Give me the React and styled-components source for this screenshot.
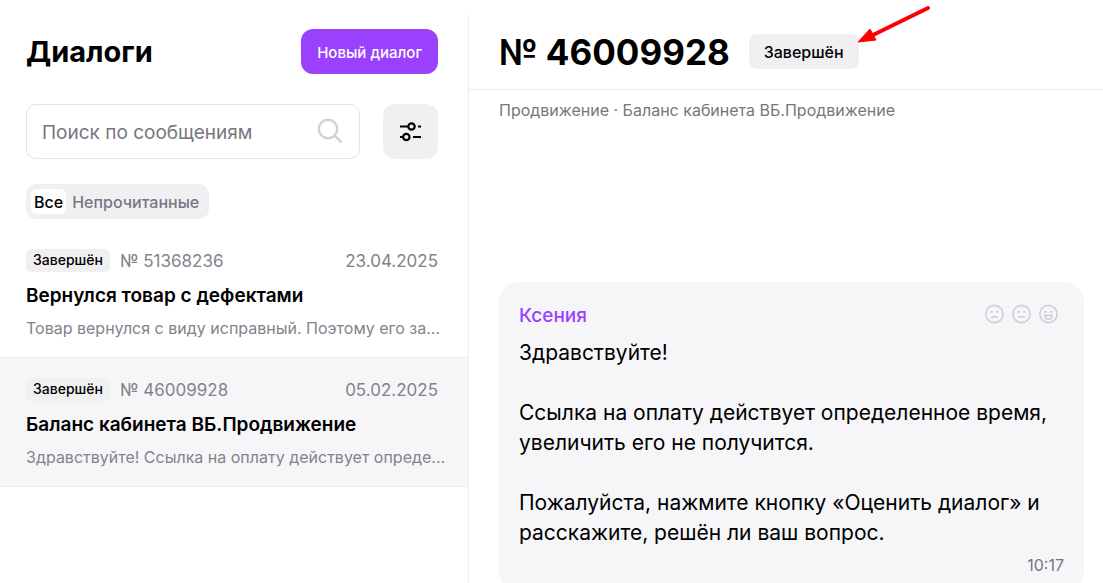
import React, { useState } from 'react';
import styled, { createGlobalStyle } from 'styled-components';

const GlobalStyle = createGlobalStyle`
  * {
    box-sizing: border-box;
  }

  body {
    margin: 0;
    background: #fff;
    color: #000;
    font-family: Inter, 'Noto Sans', sans-serif;
    overflow: hidden;
  }

  button, input {
    font-family: inherit;
  }

  h1, h2, h3, p {
    margin: 0;
  }
`;

const Page = styled.div`
  display: flex;
  height: 100vh;
  padding-top: 14px;
`;

const Sidebar = styled.aside`
  flex: 0 1 469px;
  min-width: 0;
  border-right: 1px solid #ededf0;
`;

const SidebarTop = styled.div`
  display: flex;
  flex-direction: column;
  padding: 15px 30px 10px 26px;
`;

const TitleRow = styled.div`
  display: flex;
  align-items: center;
  justify-content: space-between;
`;

const Title = styled.h2`
  font-size: 29px;
  line-height: 36px;
  font-weight: 700;
`;

const NewDialogButton = styled.button`
  height: 45px;
  padding: 2px 16px 0;
  border: 0;
  border-radius: 12px;
  background: #9a41fe;
  color: #fff;
  font-size: 15px;
  font-weight: 500;
  cursor: pointer;
`;

const SearchRow = styled.div`
  display: flex;
  gap: 23px;
  margin-top: 30px;
`;

const SearchBox = styled.label`
  display: flex;
  flex: 1;
  align-items: center;
  min-width: 0;
  height: 55px;
  padding: 0 15px;
  border: 1px solid #e3e3e8;
  border-radius: 10px;
`;

const SearchInput = styled.input`
  flex: 1;
  min-width: 0;
  padding: 2px 0 0;
  border: 0;
  outline: 0;
  background: transparent;
  color: #000;
  font-size: 19px;

  &::placeholder {
    color: #79757f;
    opacity: 1;
  }
`;

const FilterButton = styled.button`
  display: flex;
  align-items: center;
  justify-content: center;
  width: 55px;
  height: 55px;
  padding: 0;
  border: 0;
  border-radius: 12px;
  background: #f0f0f1;
  cursor: pointer;
`;

const Tabs = styled.div`
  display: flex;
  align-self: flex-start;
  gap: 3px;
  margin-top: 25px;
  padding: 5px 7px 5px 5px;
  border-radius: 10px;
  background: #f0f0f3;
`;

const Tab = styled.button`
  height: 25px;
  padding: 0 3px;
  border: 0;
  border-radius: 6px;
  background: ${({ $active }) => ($active ? '#fff' : 'transparent')};
  color: ${({ $active }) => ($active ? '#000' : '#797583')};
  font-size: 16px;
  font-weight: 500;
  cursor: pointer;
`;

const DialogItem = styled.article`
  padding: 20px 30px 17px 26px;
  border-bottom: 1px solid #ededf0;
  background: ${({ $selected }) => ($selected ? '#f6f6f9' : '#fff')};
  cursor: pointer;
`;

const DialogMeta = styled.div`
  display: flex;
  align-items: center;
  height: 23px;
  gap: 10px;
  color: #84828b;
  font-size: 17px;
`;

const DialogDate = styled.time`
  margin-left: auto;
`;

const SmallBadge = styled.span`
  padding: 0 7px 1px;
  border-radius: 5px;
  background: #f0f0f3;
  color: #000;
  font-size: 14px;
  line-height: 22px;
  font-weight: 500;
`;

const DialogTitle = styled.h3`
  margin-top: 11px;
  font-size: 19px;
  line-height: 26px;
  font-weight: 600;
  white-space: nowrap;
`;

const DialogPreview = styled.p`
  margin-top: 7px;
  color: #84828b;
  font-size: 16px;
  line-height: 24px;
  white-space: nowrap;
`;

const Main = styled.main`
  flex: 1;
  min-width: 0;
`;

const Header = styled.header`
  display: flex;
  align-items: center;
  gap: 19px;
  height: 76px;
  padding: 0 30px;
  border-bottom: 1px solid #ededf0;
`;

const Number = styled.h1`
  font-size: 35px;
  line-height: 44px;
  font-weight: 700;
  white-space: nowrap;
`;

const StatusBadge = styled.span`
  position: relative;
  padding: 1px 15px 0;
  border-radius: 8px;
  background: #f0f0f3;
  font-size: 16px;
  line-height: 34px;
  font-weight: 500;
`;

const Arrow = styled.svg`
  position: absolute;
  left: 100%;
  bottom: 100%;
  margin: 0 0 -10px -2px;
`;

const Topic = styled.p`
  padding: 9px 30px 11px;
  color: #79757f;
  font-size: 16px;
  line-height: 22px;
`;

const Messages = styled.section`
  padding: 150px 19px 0 30px;
`;

const Message = styled.article`
  padding: 20px 20px 16px;
  border-radius: 20px;
  background: #f6f6f9;
`;

const MessageHead = styled.div`
  display: flex;
  align-items: center;
  justify-content: space-between;
  height: 26px;
  padding-right: 5px;
`;

const Author = styled.span`
  color: #9a41fe;
  font-size: 19px;
  font-weight: 500;
`;

const Ratings = styled.div`
  display: flex;
  gap: 7px;
  padding-bottom: 2px;
`;

const RatingButton = styled.button`
  display: flex;
  padding: 0;
  border: 0;
  background: transparent;
  cursor: pointer;
`;

const MessageText = styled.p`
  margin-top: 10px;
  font-size: 21px;
  line-height: 30px;
  white-space: pre-line;
`;

const MessageTime = styled.time`
  display: block;
  margin-top: 6px;
  color: #79757f;
  font-size: 16px;
  line-height: 22px;
  text-align: right;
`;

const dialogs = [
  {
    number: '51368236',
    date: '23.04.2025',
    title: 'Вернулся товар с дефектами',
    preview: 'Товар вернулся с виду исправный. Поэтому его за...',
  },
  {
    number: '46009928',
    date: '05.02.2025',
    title: 'Баланс кабинета ВБ.Продвижение',
    preview: 'Здравствуйте! Ссылка на оплату действует опреде...',
  },
];

const messageText = `Здравствуйте!

Ссылка на оплату действует определенное время, увеличить его не получится.

Пожалуйста, нажмите кнопку «Оценить диалог» и расскажите, решён ли ваш вопрос.`;

const moods = [
  { name: 'Плохо', mouth: <path d="M6 13.500c1-2 5-2 6 0" /> },
  { name: 'Нормально', mouth: <path d="M6 12.200h6" /> },
  { name: 'Отлично', mouth: <path d="M5.500 10.800h7c0 5-7 5-7 0z" /> },
];

const SearchIcon = () => (
  <svg width="28" height="28" viewBox="0 0 28 28" fill="none" stroke="#d0cfd8" strokeWidth="2.4">
    <circle cx="12" cy="11" r="9.2" />
    <path d="M18.500 17.500l7 7" />
  </svg>
);

const FilterIcon = () => (
  <svg width="22" height="20" viewBox="0 0 22 20" fill="none" stroke="#000" strokeWidth="2.2">
    <path d="M0 4.500h8.500M18 4.500h3M0 15h3M13 15h8" />
    <circle cx="11.500" cy="4.500" r="3.200" />
    <circle cx="6.300" cy="15" r="3.200" />
  </svg>
);

const MoodIcon = ({ mouth }) => (
  <svg width="20" height="20" viewBox="0 0 19 19" fill="none" stroke="#d0cfd8" strokeWidth="1.5">
    <circle cx="9" cy="9.500" r="8.200" />
    <path d="M5 7.500h2.400M10.600 7.500h2.400" />
    {mouth}
  </svg>
);

function App() {
  const [tab, setTab] = useState('all');
  const [selected, setSelected] = useState('46009928');

  return (
    <>
      <GlobalStyle />
      <Page>
        <Sidebar>
          <SidebarTop>
            <TitleRow>
              <Title>Диалоги</Title>
              <NewDialogButton type="button">Новый диалог</NewDialogButton>
            </TitleRow>
            <SearchRow>
              <SearchBox>
                <SearchInput type="text" placeholder="Поиск по сообщениям" aria-label="Поиск по сообщениям" />
                <SearchIcon />
              </SearchBox>
              <FilterButton type="button" aria-label="Фильтры">
                <FilterIcon />
              </FilterButton>
            </SearchRow>
            <Tabs>
              <Tab type="button" $active={tab === 'all'} onClick={() => setTab('all')}>Все</Tab>
              <Tab type="button" $active={tab === 'unread'} onClick={() => setTab('unread')}>Непрочитанные</Tab>
            </Tabs>
          </SidebarTop>
          {dialogs.map(item => (
            <DialogItem
              key={item.number}
              $selected={item.number === selected}
              onClick={() => setSelected(item.number)}
            >
              <DialogMeta>
                <SmallBadge>Завершён</SmallBadge>
                <span>№ {item.number}</span>
                <DialogDate>{item.date}</DialogDate>
              </DialogMeta>
              <DialogTitle>{item.title}</DialogTitle>
              <DialogPreview>{item.preview}</DialogPreview>
            </DialogItem>
          ))}
        </Sidebar>
        <Main>
          <Header>
            <Number>№ 46009928</Number>
            <StatusBadge>
              Завершён
              <Arrow width="74" height="40" viewBox="0 0 74 40">
                <path d="M71 4L16 31" stroke="#f00" strokeWidth="4" strokeLinecap="round" />
                <path d="M1 38L13 25L19 36z" fill="#f00" stroke="#f00" strokeLinejoin="round" />
              </Arrow>
            </StatusBadge>
          </Header>
          <Topic>Продвижение · Баланс кабинета ВБ.Продвижение</Topic>
          <Messages>
            <Message>
              <MessageHead>
                <Author>Ксения</Author>
                <Ratings>
                  {moods.map(mood => (
                    <RatingButton key={mood.name} type="button" aria-label={mood.name}>
                      <MoodIcon mouth={mood.mouth} />
                    </RatingButton>
                  ))}
                </Ratings>
              </MessageHead>
              <MessageText>{messageText}</MessageText>
              <MessageTime>10:17</MessageTime>
            </Message>
          </Messages>
        </Main>
      </Page>
    </>
  );
}

export default App;
